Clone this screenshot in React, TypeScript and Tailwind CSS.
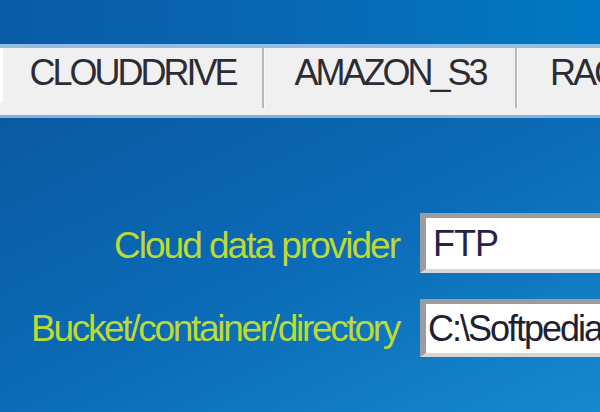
export default function App() {
    return (
        <div className="w-[600px] h-[412px] overflow-hidden flex flex-col font-['Liberation_Sans',Arial,sans-serif]">
            {/* window top strip */}
            <div className="h-[44px] bg-linear-to-r from-[#0a5ba5] via-[#0868b4] to-[#0079c2]" />

            {/* tab strip */}
            <div className="h-[74px] flex bg-[#f0f0f0] border-t-4 border-t-[#93bde2] border-b-[3px] border-b-[#7fb2dc]">
                <div className="w-[3px] h-[54px] bg-white shrink-0" />
                <div className="w-[259px] shrink-0 flex justify-center pt-[7px]">
                    <span className="text-[36px] leading-none tracking-[-3px] text-[#2c2c34]">CLOUDDRIVE</span>
                </div>
                <div className="w-[3px] h-[60px] shrink-0 bg-[#b9b9b9] border-r border-r-[#fafafa]" />
                <div className="w-[250px] shrink-0 flex justify-center pt-[7px]">
                    <span className="text-[36px] leading-none tracking-[-3px] text-[#2c2c34]">AMAZON_S3</span>
                </div>
                <div className="w-[3px] h-[60px] shrink-0 bg-[#b9b9b9] border-r border-r-[#fafafa]" />
                <div className="flex-1 min-w-0 pl-[32px] pt-[7px] overflow-hidden">
                    <span className="text-[36px] leading-none tracking-[-3px] text-[#2c2c34] whitespace-nowrap">RACKSPACE</span>
                </div>
            </div>

            {/* form area */}
            <div className="flex-1 pt-[95px] flex flex-col gap-[26px] bg-linear-to-br from-[#0a5aa2] via-[#0b6bb6] to-[#1689cf]">
                <div className="flex items-center gap-[21px]">
                    <label className="w-[399px] shrink-0 text-right text-[37px] leading-none tracking-[-2px] text-[#bcd934] whitespace-nowrap pt-[4px]">
                        Cloud data provider
                    </label>
                    <div className="w-[200px] shrink-0 h-[60px] bg-white border-t-[5px] border-l-[6px] border-b-[4px] border-t-[#9c9c9c] border-l-[#9c9c9c] border-b-[#d6d6d6] flex items-center pl-[7px] overflow-hidden">
                        <span className="text-[36px] leading-none tracking-[-1px] text-[#23234a] whitespace-nowrap">FTP</span>
                    </div>
                </div>
                <div className="flex items-center gap-[21px]">
                    <label className="w-[399px] shrink-0 text-right text-[37px] leading-none tracking-[-2.3px] text-[#bcd934] whitespace-nowrap">
                        Bucket/container/directory
                    </label>
                    <div className="w-[200px] shrink-0 h-[58px] bg-white border-t-[5px] border-l-[6px] border-b-[4px] border-t-[#9c9c9c] border-l-[#9c9c9c] border-b-[#d6d6d6] flex items-center pl-[2px] overflow-hidden">
                        <span className="text-[36px] leading-none tracking-[-2px] text-[#202030] whitespace-nowrap">C:\Softpedia</span>
                    </div>
                </div>
            </div>
        </div>
    );
}
